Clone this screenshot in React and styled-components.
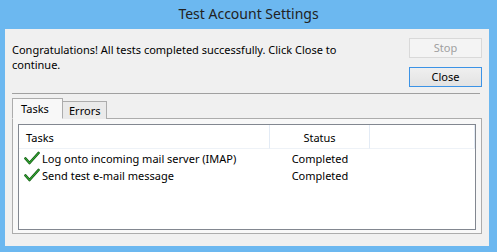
import React from 'react';
import styled, { createGlobalStyle } from 'styled-components';

const GlobalStyle = createGlobalStyle`
    html, body {
        margin: 0;
        padding: 0;
        background: #6cb8f0;
    }
    * {
        box-sizing: border-box;
    }
`

const Frame = styled.div`
    width: 497px;
    height: 252px;
    background-color: #6cb8f0;
    display: flex;
    flex-direction: column;
    font-family: "Noto Sans", "Open Sans", sans-serif;
    overflow: hidden;
`

const TitleBar = styled.div`
    height: 29px;
    display: flex;
    justify-content: center;
    align-items: center;
    padding-bottom: 3px;
    font-size: 14px;
    color: #222;
`

const Client = styled.div`
    margin: 0 8px 6px 5px;
    height: 217px;
    background-color: #f0f0f0;
    padding: 9px 7px 0 7px;
    display: flex;
    flex-direction: column;
`

const TopRow = styled.div`
    display: flex;
    justify-content: space-between;
    height: 55px;
`

const Message = styled.div`
    font-size: 11px;
    line-height: 15px;
    color: #000;
    width: 340px;
    padding-top: 4px;
`

const Buttons = styled.div`
    display: flex;
    flex-direction: column;
    gap: 9px;
`

const Btn = styled.button`
    width: 73px;
    height: 20px;
    padding: 0;
    font-family: inherit;
    font-size: 11px;
    line-height: 16px;
    background: ${p => p.disabled ? '#f4f4f4' : 'linear-gradient(#efefef, #e3e3e3)'};
    color: ${p => p.disabled ? '#a0a0a0' : '#000'};
    border: 1px solid ${p => p.disabled ? '#d9d9d9' : '#3c93e6'};
`

const Separator = styled.div`
    height: 1px;
    background-color: #a0a0a0;
    margin-right: 2px;
`

const TabStrip = styled.div`
    display: flex;
    align-items: flex-end;
    margin-top: 4px;
    height: 21px;
    position: relative;
    z-index: 1;
`

const Tab = styled.div`
    height: ${p => p.active ? '21px' : '18px'};
    padding: ${p => p.active ? '0 0 0 8px' : '0 0 0 6px'};
    width: ${p => p.active ? '51px' : '44px'};
    display: flex;
    align-items: center;
    font-size: 11px;
    color: #000;
    background-color: ${p => p.active ? '#f8f8f8' : '#eaeaea'};
    border: 1px solid #acacac;
    border-bottom: ${p => p.active ? '1px solid #f8f8f8' : 'none'};
    border-left: ${p => p.active ? '1px solid #acacac' : 'none'};
`

const Panel = styled.div`
    height: 116px;
    margin-top: -1px;
    background-color: #f8f8f8;
    border: 1px solid #acacac;
    padding: 5px 5px 3px 5px;
`

const ListBox = styled.div`
    height: 100%;
    background-color: #fff;
    border: 1px solid #828790;
`

const Grid = styled.div`
    display: grid;
    grid-template-columns: 251px 100px 1fr;
`

const HeaderCell = styled.div`
    height: 24px;
    display: flex;
    align-items: center;
    justify-content: ${p => p.center ? 'center' : 'flex-start'};
    padding: 2px 0 0 ${p => p.center ? '0' : '7px'};
    font-size: 11px;
    color: #000;
    border-right: 1px solid #e3ebf5;
    border-bottom: 1px solid #eef2f7;
`

const Cell = styled.div`
    height: 17px;
    display: flex;
    align-items: center;
    justify-content: ${p => p.center ? 'center' : 'flex-start'};
    padding: 1px 0 0 ${p => p.center ? '0' : '5px'};
    gap: 2px;
    font-size: 11px;
    color: #000;
    white-space: nowrap;
`

const Check = () => (
    <svg width="16" height="16" viewBox="0 0 16 16">
        <path d="M1.5 8.5 L5.5 13 L14.5 3" fill="none" stroke="#0e5a0e" strokeWidth="2.6" strokeLinecap="round" strokeLinejoin="round" />
        <path d="M1.5 8.5 L5.5 13 L14.5 3" fill="none" stroke="#3aae3a" strokeWidth="1.1" strokeLinecap="round" strokeLinejoin="round" />
    </svg>
)

const tasks = [
    { name: 'Log onto incoming mail server (IMAP)', status: 'Completed' },
    { name: 'Send test e-mail message', status: 'Completed' },
]

const App = () => {
    return (
        <Frame>
            <GlobalStyle />
            <TitleBar>Test Account Settings</TitleBar>
            <Client>
                <TopRow>
                    <Message>Congratulations! All tests completed successfully. Click Close to continue.</Message>
                    <Buttons>
                        <Btn disabled>Stop</Btn>
                        <Btn>Close</Btn>
                    </Buttons>
                </TopRow>
                <Separator />
                <TabStrip>
                    <Tab active>Tasks</Tab>
                    <Tab>Errors</Tab>
                </TabStrip>
                <Panel>
                    <ListBox>
                        <Grid>
                            <HeaderCell>Tasks</HeaderCell>
                            <HeaderCell center>Status</HeaderCell>
                            <HeaderCell />
                            {tasks.map(t => (
                                <React.Fragment key={t.name}>
                                    <Cell><Check />{t.name}</Cell>
                                    <Cell center>{t.status}</Cell>
                                    <Cell />
                                </React.Fragment>
                            ))}
                        </Grid>
                    </ListBox>
                </Panel>
            </Client>
        </Frame>
    );
};

export default App;
